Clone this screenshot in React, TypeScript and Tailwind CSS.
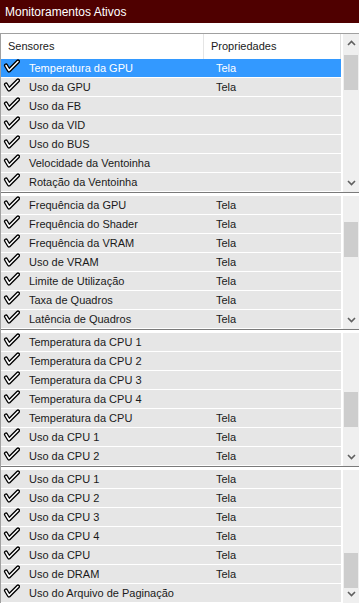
import type { ReactNode } from 'react';

type Row = { name: string; prop?: string; selected?: boolean };

const groups: { rows: Row[]; thumbTop: number; upArrow?: boolean }[] = [
    {
        upArrow: true,
        thumbTop: 21,
        rows: [
            { name: 'Temperatura da GPU', prop: 'Tela', selected: true },
            { name: 'Uso da GPU', prop: 'Tela' },
            { name: 'Uso da FB' },
            { name: 'Uso da VID' },
            { name: 'Uso do BUS' },
            { name: 'Velocidade da Ventoinha' },
            { name: 'Rotação da Ventoinha' },
        ],
    },
    {
        thumbTop: 26,
        rows: [
            { name: 'Frequência da GPU', prop: 'Tela' },
            { name: 'Frequência do Shader', prop: 'Tela' },
            { name: 'Frequência da VRAM', prop: 'Tela' },
            { name: 'Uso de VRAM', prop: 'Tela' },
            { name: 'Limite de Utilização', prop: 'Tela' },
            { name: 'Taxa de Quadros', prop: 'Tela' },
            { name: 'Latência de Quadros', prop: 'Tela' },
        ],
    },
    {
        thumbTop: 59,
        rows: [
            { name: 'Temperatura da CPU 1' },
            { name: 'Temperatura da CPU 2' },
            { name: 'Temperatura da CPU 3' },
            { name: 'Temperatura da CPU 4' },
            { name: 'Temperatura da CPU', prop: 'Tela' },
            { name: 'Uso da CPU 1', prop: 'Tela' },
            { name: 'Uso da CPU 2', prop: 'Tela' },
        ],
    },
    {
        thumbTop: 83,
        rows: [
            { name: 'Uso da CPU 1', prop: 'Tela' },
            { name: 'Uso da CPU 2', prop: 'Tela' },
            { name: 'Uso da CPU 3', prop: 'Tela' },
            { name: 'Uso da CPU 4', prop: 'Tela' },
            { name: 'Uso da CPU', prop: 'Tela' },
            { name: 'Uso de DRAM', prop: 'Tela' },
            { name: 'Uso do Arquivo de Paginação' },
        ],
    },
];

// outlined check mark, like the old windows listview state icon
function Check() {
    return (
        <svg width="17" height="15" viewBox="0 0 17 15" className="shrink-0 -mt-[3px]">
            <path d="M3 6.5 L6 11.5 L15 2.5" fill="none" stroke="#000" strokeWidth="4.2" strokeLinecap="round" strokeLinejoin="round" />
            <path d="M3 6.5 L6 11.5 L15 2.5" fill="none" stroke="#fff" strokeWidth="1.5" strokeLinecap="round" strokeLinejoin="round" />
        </svg>
    );
}

function Chevron({ up }: { up?: boolean }) {
    return (
        <svg width="9" height="6" viewBox="0 0 9 6">
            <path d={up ? 'M1 5 L4.5 1.5 L8 5' : 'M1 1 L4.5 4.5 L8 1'} fill="none" stroke="#606060" strokeWidth="1.6" />
        </svg>
    );
}

function Scrollbar({ thumbTop, upArrow, children }: { thumbTop: number; upArrow?: boolean; children?: ReactNode }) {
    return (
        <div className="relative w-[16px] ml-[2px] bg-[#efefef] self-stretch">
            {upArrow && (
                <div className="absolute top-[6px] left-0 w-full flex justify-center">
                    <Chevron up />
                </div>
            )}
            <div className="absolute left-[1px] w-[14px] h-[35px] bg-[#cdcdcd]" style={{ top: thumbTop }} />
            <div className="absolute bottom-[6px] left-0 w-full flex justify-center">
                <Chevron />
            </div>
            {children}
        </div>
    );
}

function ListRow({ row }: { row: Row }) {
    return (
        <div
            className={`flex items-center h-[19px] border-b border-white ${row.selected ? 'bg-[#3399ff] text-white' : 'bg-[#e6e6e6] text-[#1a1a1a]'}`}
        >
            <div className="w-[28px] pl-[2px] flex items-center">
                <Check />
            </div>
            <div className="w-[187px] whitespace-nowrap">{row.name}</div>
            <div>{row.prop}</div>
        </div>
    );
}

export default function App() {
    return (
        <div className="w-[359px] h-[605px] bg-white overflow-hidden text-[11px] leading-none font-['Liberation_Sans',Arial,sans-serif]">
            <div className="h-[23px] bg-[#4f0000] text-white text-[12px] flex items-center pl-[5px]">
                Monitoramentos Ativos
            </div>
            <div className="h-[10px]" />
            <div className="border-t border-[#a0a0a0] border-l">
                {groups.map((g, i) => (
                    <div key={i}>
                        {i > 0 && <div className="h-[4px] border-t border-[#7a7a7a] bg-white" />}
                        <div className="flex">
                            <div className="w-[340px]">
                                {i === 0 && (
                                    <div className="h-[25px] flex items-center text-[#1a1a1a] border-r border-[#e0e0e0]">
                                        <div className="w-[203px] pl-[7px] h-full flex items-center border-r border-[#e5e5e5]">Sensores</div>
                                        <div className="pl-[7px]">Propriedades</div>
                                    </div>
                                )}
                                {g.rows.map((r, j) => (
                                    <ListRow key={j} row={r} />
                                ))}
                            </div>
                            <Scrollbar thumbTop={g.thumbTop} upArrow={g.upArrow} />
                        </div>
                    </div>
                ))}
            </div>
        </div>
    );
}
